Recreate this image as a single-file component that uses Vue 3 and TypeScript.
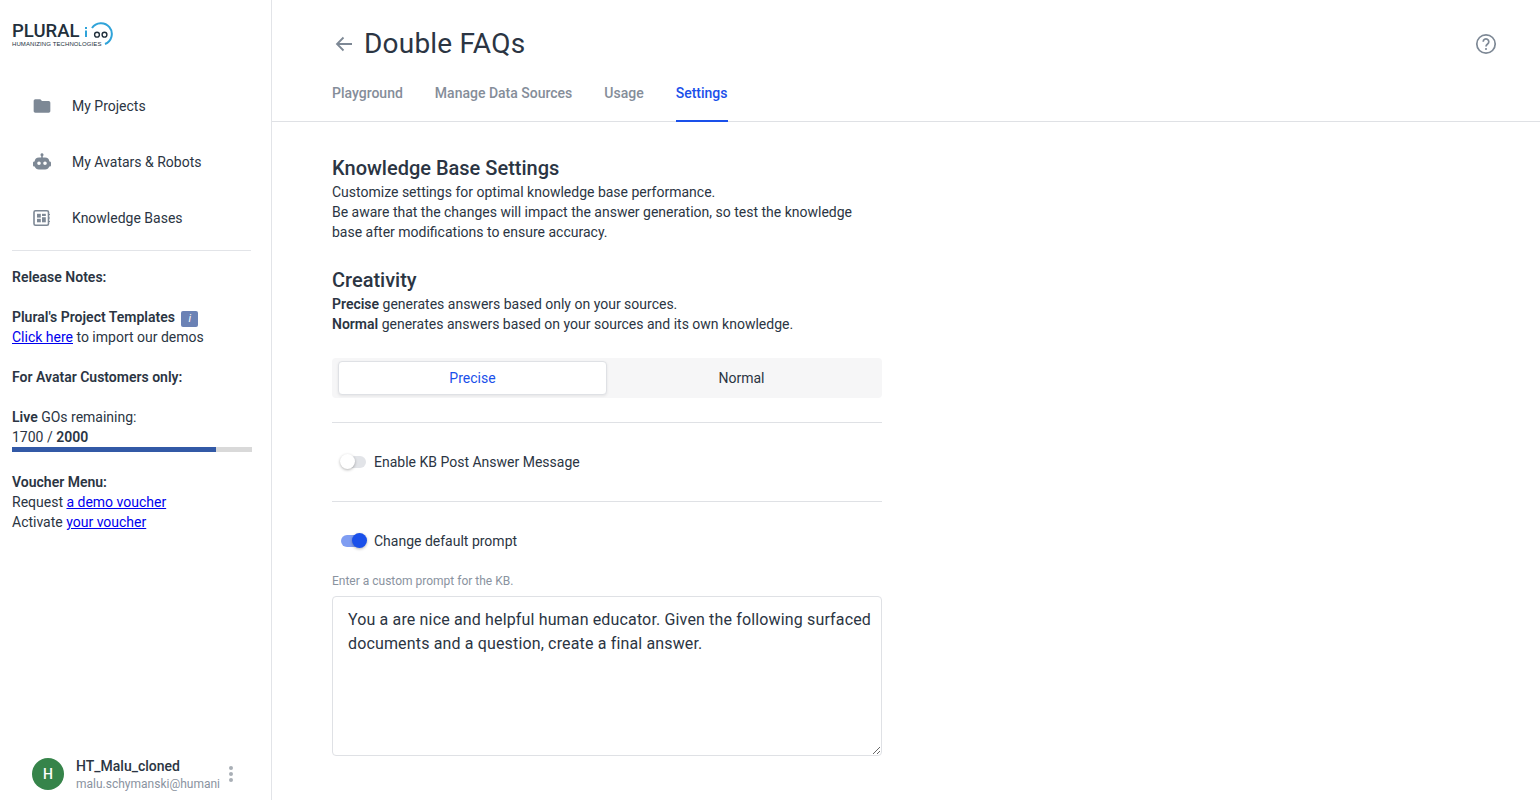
<script setup lang="ts">
const tabs: string[] = ['Playground', 'Manage Data Sources', 'Usage', 'Settings']
const prompt = 'You a are nice and helpful human educator. Given the following surfaced documents and a question, create a final answer.'
</script>

<template>
  <div class="app">
    <aside class="sidebar">
      <div class="logo">
        <div class="logo-text">
          <span class="logo-name">PLURAL</span>
          <span class="logo-sub">HUMANIZING TECHNOLOGIES</span>
        </div>
        <svg class="logo-mark" width="32" height="26" viewBox="0 0 32 26">
          <rect x="3" y="8.500" width="2" height="6.500" fill="#2fa3d9" />
          <rect x="3" y="5" width="2" height="2" fill="#2fa3d9" />
          <path d="M10 6A10.800 10.800 0 1 1 23 22" fill="none" stroke="#2fa3d9" stroke-width="2" />
          <circle cx="15" cy="12.700" r="2.400" fill="none" stroke="#22303c" stroke-width="1.400" />
          <circle cx="22.500" cy="12.700" r="2.400" fill="none" stroke="#22303c" stroke-width="1.400" />
        </svg>
      </div>

      <nav class="nav">
        <a class="nav-item">
          <svg width="20" height="20" viewBox="0 0 24 24"><path fill="#7d8895" d="M10 4H4c-1.100 0-2 .9-2 2v12c0 1.100.9 2 2 2h16c1.100 0 2-.9 2-2V8c0-1.100-.9-2-2-2h-8l-2-2z" /></svg>
          <span>My Projects</span>
        </a>
        <a class="nav-item">
          <svg width="20" height="20" viewBox="0 0 20 20">
            <path fill="#7d8895" fill-rule="evenodd" d="M10 1.300a1.500 1.500 0 0 1 .8 2.800V5.500h2.200A4.500 4.500 0 0 1 17.400 9.500h.3c.7 0 1.300.6 1.300 1.300v2.400c0 .7-.6 1.300-1.300 1.300h-.4A4.500 4.500 0 0 1 13 17.500H7a4.500 4.500 0 0 1-4.300-3h-.4C1.600 14.500 1 13.900 1 13.200v-2.400c0-.7.600-1.300 1.300-1.300h.3A4.500 4.500 0 0 1 7 5.500h2.200V4.100A1.500 1.500 0 0 1 10 1.300zM7 9.500a1.800 1.800 0 1 0 0 3.600 1.800 1.800 0 0 0 0-3.600zm6 0a1.800 1.800 0 1 0 0 3.600 1.800 1.800 0 0 0 0-3.600z" />
          </svg>
          <span>My Avatars &amp; Robots</span>
        </a>
        <a class="nav-item">
          <svg width="20" height="20" viewBox="0 0 20 20">
            <rect x="2" y="2.800" width="14.500" height="14.400" rx="1.500" fill="none" stroke="#7d8895" stroke-width="1.600" />
            <rect x="5" y="5.800" width="3.800" height="3.800" fill="#7d8895" />
            <rect x="10" y="5.800" width="3.800" height="2.200" fill="#7d8895" />
            <rect x="5" y="10.800" width="3.800" height="3.500" fill="#7d8895" />
            <rect x="10" y="9.200" width="3.800" height="5.100" fill="#7d8895" />
            <path d="M16.500 6.500h1.500M16.500 10h1.500M16.500 13.500h1.500" stroke="#7d8895" stroke-width="1.200" />
          </svg>
          <span>Knowledge Bases</span>
        </a>
      </nav>

      <div class="notes">
        <p class="line strong gap">Release Notes:</p>
        <p class="line strong">Plural's Project Templates <span class="info">i</span></p>
        <p class="line gap"><a class="link">Click here</a> to import our demos</p>
        <p class="line strong gap">For Avatar Customers only:</p>
        <p class="line"><b>Live</b> GOs remaining:</p>
        <p class="line">1700 / <b>2000</b></p>
        <div class="progress"><div class="progress-fill" :style="{ width: '85%' }"></div></div>
        <p class="line strong">Voucher Menu:</p>
        <p class="line">Request <a class="link">a demo voucher</a></p>
        <p class="line">Activate <a class="link">your voucher</a></p>
      </div>

      <div class="user">
        <div class="avatar">H</div>
        <div class="user-text">
          <div class="user-name">HT_Malu_cloned</div>
          <div class="user-mail">malu.schymanski@humani</div>
        </div>
        <svg class="more" width="6" height="18" viewBox="0 0 6 18">
          <circle cx="3" cy="3" r="2" fill="#a9afb6" />
          <circle cx="3" cy="9" r="2" fill="#a9afb6" />
          <circle cx="3" cy="15" r="2" fill="#a9afb6" />
        </svg>
      </div>
    </aside>

    <main class="main">
      <header class="head">
        <div class="title-row">
          <svg class="back" width="24" height="24" viewBox="0 0 24 24"><path fill="none" stroke="#7d8895" stroke-width="1.800" d="M20 12H5M11.500 5.500 5 12l6.500 6.500" /></svg>
          <h1 class="title">Double FAQs</h1>
          <svg class="help" width="24" height="24" viewBox="0 0 24 24">
            <circle cx="12" cy="12" r="9.200" fill="none" stroke="#7d8895" stroke-width="1.700" />
            <path d="M9.200 9.700a2.800 2.800 0 1 1 4.400 2.300c-1 .7-1.600 1.200-1.600 2.500" fill="none" stroke="#7d8895" stroke-width="1.700" />
            <circle cx="12" cy="17" r="1.050" fill="#7d8895" />
          </svg>
        </div>
        <div class="tabs">
          <div v-for="t in tabs" :key="t" class="tab" :class="{ active: t === 'Settings' }">{{ t }}</div>
        </div>
      </header>

      <section class="content">
        <h2 class="h2">Knowledge Base Settings</h2>
        <p class="para">Customize settings for optimal knowledge base performance.</p>
        <p class="para">Be aware that the changes will impact the answer generation, so test the knowledge base after modifications to ensure accuracy.</p>

        <h2 class="h2 second">Creativity</h2>
        <p class="para"><b>Precise</b> generates answers based only on your sources.</p>
        <p class="para"><b>Normal</b> generates answers based on your sources and its own knowledge.</p>

        <div class="segment">
          <div class="seg active">Precise</div>
          <div class="seg">Normal</div>
        </div>

        <div class="toggle-row bordered">
          <span class="switch"><span class="track"></span><span class="thumb"></span></span>
          <span>Enable KB Post Answer Message</span>
        </div>
        <div class="toggle-row second-toggle">
          <span class="switch on"><span class="track"></span><span class="thumb"></span></span>
          <span>Change default prompt</span>
        </div>

        <label class="hint" for="prompt">Enter a custom prompt for the KB.</label>
        <textarea id="prompt" class="area" :value="prompt"></textarea>
      </section>
    </main>
  </div>
</template>

<style>
html, body { margin: 0; padding: 0; background: #fff; }
</style>

<style scoped>
* { box-sizing: border-box; }
.app {
  display: flex;
  width: 1540px;
  height: 800px;
  overflow: hidden;
  font-family: Roboto, "Liberation Sans", sans-serif;
  font-size: 14px;
  line-height: 20px;
  color: #2b3543;
}
.sidebar {
  width: 272px;
  height: 800px;
  flex: none;
  border-right: 1px solid #e2e4e8;
  display: flex;
  flex-direction: column;
}
.logo {
  height: 78px;
  padding: 22px 0 0 12px;
  display: flex;
  align-items: flex-start;
}
.logo-text { display: flex; flex-direction: column; width: 70px; }
.logo-name {
  font-family: Roboto, sans-serif;
  font-size: 18.500px;
  font-weight: 500;
  line-height: 19px;
  color: #22303c;
}
.logo-sub {
  font-family: "Liberation Sans", sans-serif;
  font-size: 6px;
  line-height: 6px;
  letter-spacing: 0.1px;
  color: #22303c;
  white-space: nowrap;
}
.logo-mark { flex: none; }
.nav {
  margin: 0 20px 0 12px;
  padding-bottom: 4px;
  border-bottom: 1px solid #e2e4e8;
}
.nav-item {
  height: 56px;
  padding-left: 20px;
  display: flex;
  align-items: center;
  gap: 20px;
}
.notes { padding: 16px 19px 0 12px; }
.line { margin: 0; height: 20px; white-space: nowrap; }
.gap { margin-bottom: 20px; }
.strong { font-weight: 600; }
b { font-weight: 600; }
.link { color: #0000ee; text-decoration: underline; }
.info {
  display: inline-block;
  width: 17px;
  height: 16px;
  margin-left: 3px;
  border-radius: 2px;
  background: #6b82b5;
  color: #fff;
  font-size: 11px;
  font-style: italic;
  font-weight: 400;
  line-height: 16px;
  text-align: center;
}
.progress {
  height: 5px;
  margin: 0 0 20px;
  background: #d9d9d9;
}
.progress-fill { height: 100%; background: #3259a6; }
.user {
  margin-top: auto;
  height: 52px;
  padding: 8px 0 0 32px;
  display: flex;
  align-items: flex-start;
}
.avatar {
  width: 32px;
  height: 32px;
  margin-top: 2px;
  border-radius: 50%;
  background: #36844a;
  color: #fff;
  font-size: 14px;
  font-weight: 500;
  line-height: 32px;
  text-align: center;
  flex: none;
}
.user-text { margin-left: 12px; width: 147px; }
.user-name { font-weight: 500; line-height: 20px; white-space: nowrap; }
.user-mail { font-size: 12px; line-height: 16px; color: #8a93a0; white-space: nowrap; }
.more { margin: 9px 0 0 5px; }
.main { flex: 1; min-width: 0; }
.head { border-bottom: 1px solid #dfe1e5; height: 122px; }
.title-row {
  height: 64px;
  padding: 24px 42px 0 60px;
  display: flex;
  align-items: center;
}
.back { margin-right: 8px; }
.title {
  margin: 0;
  font-size: 28px;
  font-weight: 400;
  line-height: 36px;
  letter-spacing: 0.2px;
  color: #2b3543;
}
.help { margin-left: auto; }
.tabs { display: flex; gap: 32px; padding-left: 60px; }
.tab {
  height: 58px;
  padding-top: 19px;
  font-weight: 500;
  color: #858d99;
  white-space: nowrap;
}
.tab.active { width: 52px; color: #1a50ea; border-bottom: 2px solid #1a50ea; }
.content { width: 610px; padding: 34px 0 0 60px; }
.h2 {
  margin: 0 0 2px;
  font-size: 20px;
  font-weight: 500;
  line-height: 24px;
  color: #2b3543;
}
.h2.second { margin-top: 26px; margin-bottom: 2px; }
.para { margin: 0; }
.segment {
  display: flex;
  height: 40px;
  margin-top: 24px;
  padding: 3px 6px;
  background: #f6f6f7;
  border-radius: 4px;
}
.seg { flex: 1; text-align: center; line-height: 34px; }
.seg.active {
  flex: none;
  width: 269px;
  background: #fff;
  border: 1px solid #dfe1e5;
  border-radius: 4px;
  color: #1a50ea;
  line-height: 32px;
  box-shadow: 0 1px 3px rgba(0, 0, 0, 0.08);
}
.toggle-row {
  display: flex;
  align-items: center;
  height: 79px;
  padding-left: 8px;
  gap: 8px;
  border-top: 1px solid #dfe1e5;
}
.toggle-row.bordered { margin-top: 24px; }
.toggle-row.second-toggle { height: 72px; align-items: flex-start; padding-top: 29px; }
.switch { position: relative; width: 26px; height: 16px; flex: none; }
.second-toggle .switch { margin-top: 2px; }
.track { position: absolute; left: 1px; right: 0; top: 2px; height: 12px; border-radius: 6px; background: #e2e4e8; }
.thumb {
  position: absolute;
  left: 0;
  top: 0;
  width: 15px;
  height: 15px;
  border-radius: 50%;
  background: #fff;
  box-shadow: 0 1px 3px rgba(0, 0, 0, 0.3);
}
.on .track { background: #7f9df2; }
.on .thumb { left: 12px; background: #1a50ea; }
.hint {
  display: block;
  font-size: 12px;
  line-height: 16px;
  color: #8a93a0;
}
.area {
  display: block;
  width: 550px;
  height: 160px;
  margin-top: 7px;
  padding: 11px 8px 10px 15px;
  border: 1px solid #dfe1e5;
  border-radius: 4px;
  background: #fff;
  font-family: Roboto, "Liberation Sans", sans-serif;
  font-size: 16px;
  line-height: 24px;
  letter-spacing: 0.15px;
  color: #2b3543;
  outline: none;
}
</style>
